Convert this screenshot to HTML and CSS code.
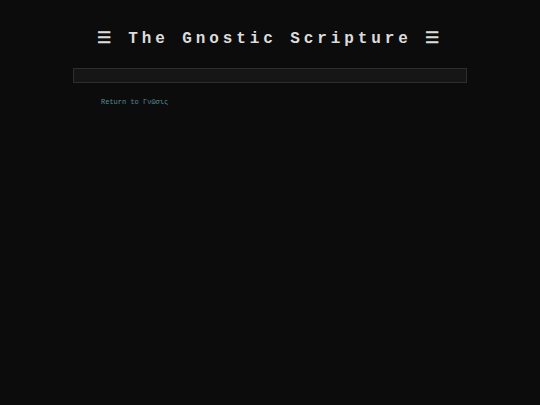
FILE: index.html
```html
<!DOCTYPE html>
<html>
<head>
<meta charset="utf-8">
<link rel="stylesheet" href="styles.css">
</head>
<body>
<header class="header">
  <h1 class="title">☰ The Gnostic Scripture ☰</h1>
</header>
<main class="main">
  <div class="search-box"></div>
  <nav class="back">
    <a class="back-link" href="#">Return to Γνῶσις</a>
  </nav>
</main>
</body>
</html>
```
FILE: styles.css
```css
html, body {
  margin: 0;
  padding: 0;
  background: #0c0c0c;
  height: 100%;
}
body {
  font-family: "Liberation Mono", "DejaVu Sans Mono", monospace;
  color: #d0d0d0;
}
.header {
  padding-top: 28px;
  display: flex;
  justify-content: center;
}
.title {
  margin: 0;
  font-size: 16px;
  font-weight: bold;
  letter-spacing: 3.9px;
  line-height: 22px;
  color: #dcdcdc;
}
.main {
  width: 394px;
  margin: 18px auto 0;
}
.search-box {
  height: 13px;
  border: 1px solid #2e2e2e;
  background: #161616;
}
.back {
  padding: 8px 28px;
}
.back-link {
  font-family: "Liberation Mono", monospace;
  font-size: 7px;
  color: #548c9c;
  text-decoration: none;
}
```
